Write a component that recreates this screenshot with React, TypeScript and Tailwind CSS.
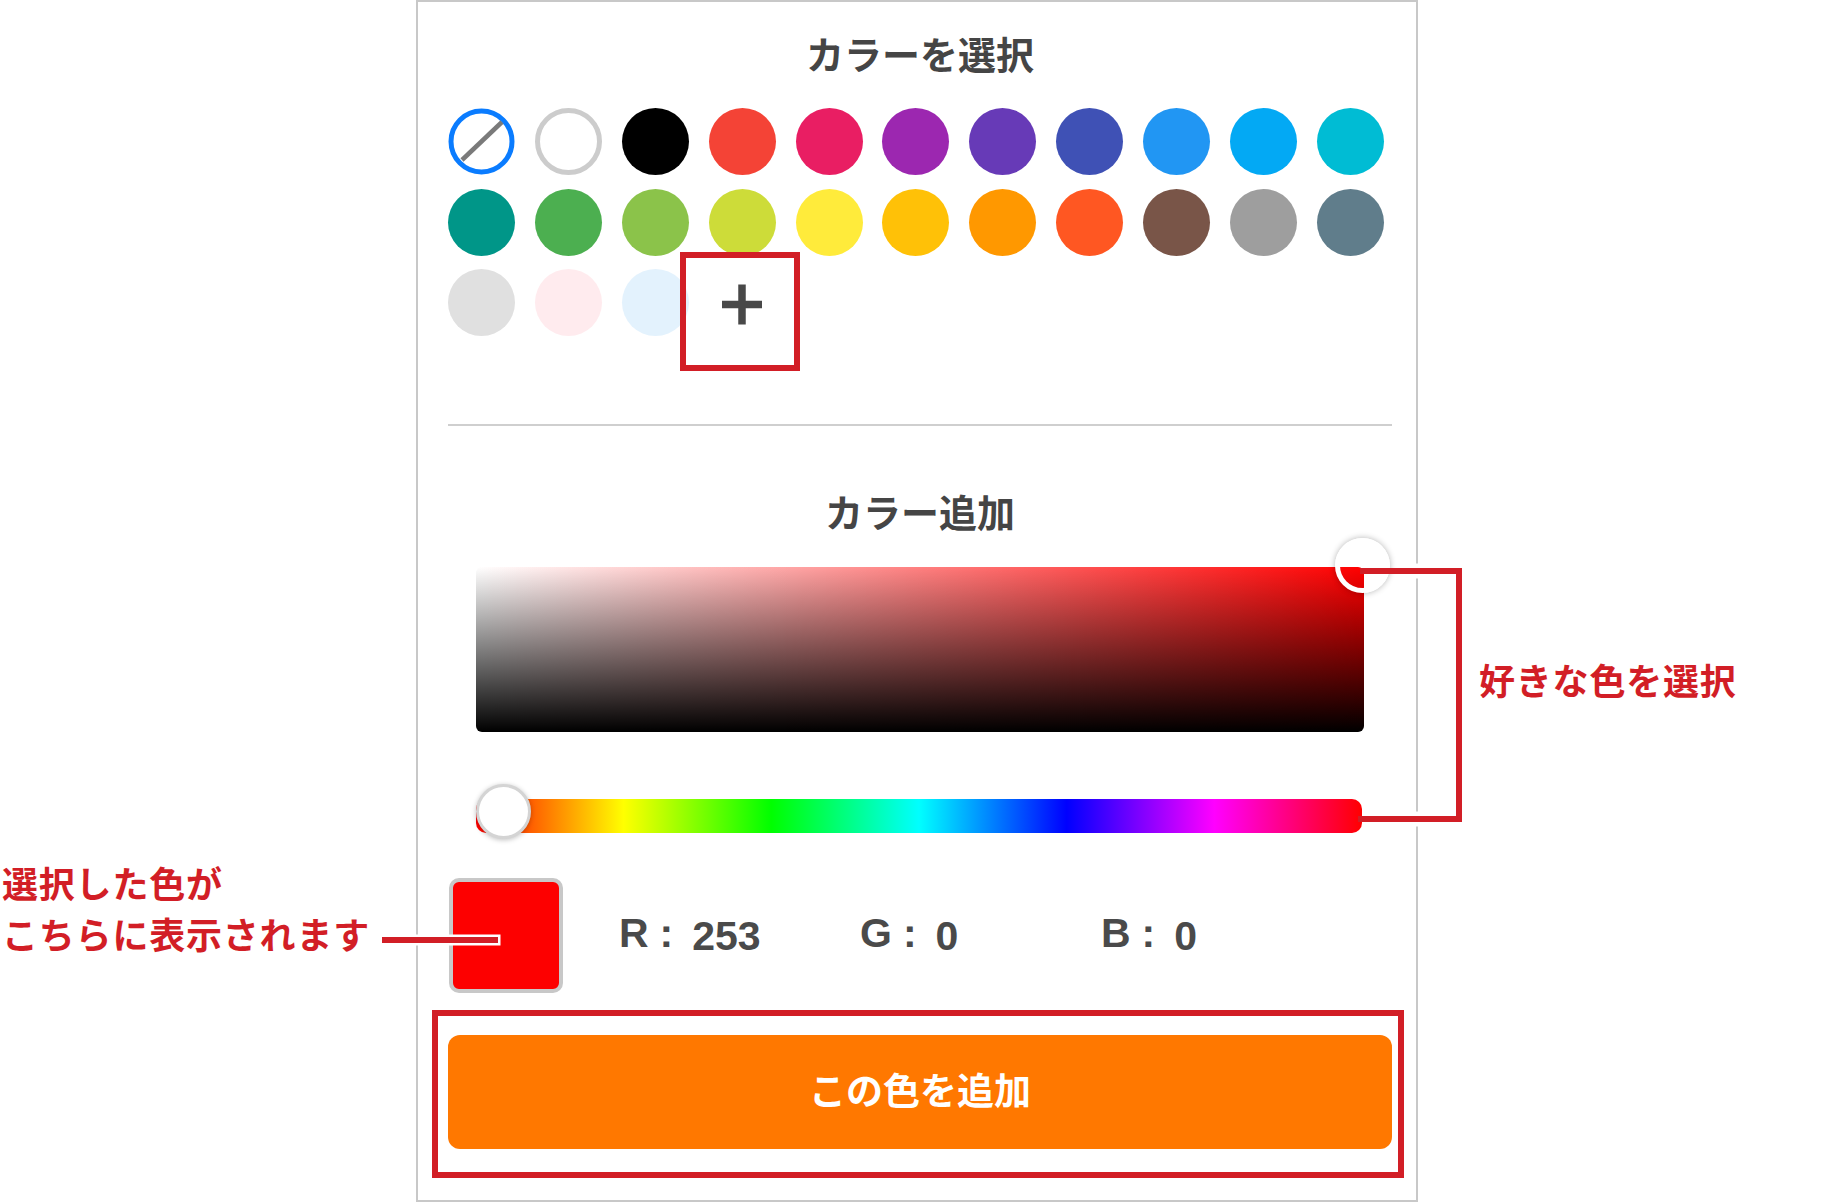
import React from "react";

const RED = "#d21e26";

const row1 = [
  "none",
  "white",
  "bg-[#000000]",
  "bg-[#f44336]",
  "bg-[#e91e63]",
  "bg-[#9c27b0]",
  "bg-[#673ab7]",
  "bg-[#3f51b5]",
  "bg-[#2196f3]",
  "bg-[#03a9f4]",
  "bg-[#00bcd4]",
];
const row2 = [
  "bg-[#009688]",
  "bg-[#4caf50]",
  "bg-[#8bc34a]",
  "bg-[#cddc39]",
  "bg-[#ffeb3b]",
  "bg-[#ffc107]",
  "bg-[#ff9800]",
  "bg-[#ff5722]",
  "bg-[#795548]",
  "bg-[#9e9e9e]",
  "bg-[#607d8b]",
];
const row3 = ["bg-[#e0e0e0]", "bg-[#ffebee]", "bg-[#e3f2fd]"];

function Swatch({ c }: { c: string }) {
  if (c === "none") {
    return (
      <svg width="67" height="67" viewBox="0 0 67 67">
        <circle cx="33.5" cy="33.5" r="30.5" fill="white" stroke="#0a7cff" strokeWidth="5" />
        <line x1="14" y1="52" x2="54" y2="14" stroke="#7a7a7a" strokeWidth="4.5" />
      </svg>
    );
  }
  if (c === "white") {
    return <div className="w-[67px] h-[67px] rounded-full bg-white border-[5px] border-[#cccccc]" />;
  }
  return <div className={`w-[67px] h-[67px] rounded-full ${c}`} />;
}

function Channel({ label, value }: { label: string; value: string }) {
  return (
    <div className="flex items-baseline w-[241px]">
      <span>{label}</span>
      <span className="ml-[11px]">:</span>
      <span className="ml-[19px] translate-y-[3px]">{value}</span>
    </div>
  );
}

export default function App() {
  return (
    <div className="relative flex w-[1844px] h-[1202px] bg-white overflow-hidden font-['Noto_Sans_CJK_JP',sans-serif]">
      {/* left annotation */}
      <div className="w-[416px] shrink-0 pt-[857px] pl-[2px]">
        <p className="text-[36px] leading-[51px] tracking-[0.8px] font-bold text-[#d21e26] whitespace-nowrap">
          選択した色が
          <br />
          こちらに表示されます
        </p>
      </div>

      {/* panel */}
      <div className="w-[1002px] h-[1202px] shrink-0 border-2 border-[#c8c8c8] pl-[30px] pr-[24px] flex flex-col">
        <h2 className="mt-[32px] text-center text-[38px] leading-[38px] font-bold text-[#454545]">
          カラーを選択
        </h2>

        <div className="mt-[36px] grid grid-cols-[repeat(11,67px)] gap-x-[19.9px] gap-y-[13.5px]">
          {row1.map((c, i) => (
            <Swatch key={"a" + i} c={c} />
          ))}
          {row2.map((c, i) => (
            <Swatch key={"b" + i} c={c} />
          ))}
          {row3.map((c, i) => (
            <Swatch key={"c" + i} c={c} />
          ))}
          <div className="relative w-[67px] h-[67px] flex items-center justify-center">
            <svg width="42" height="42" viewBox="0 0 42 42" className="translate-y-[1.5px]">
              <line x1="21" y1="1" x2="21" y2="41" stroke="#484848" strokeWidth="7.5" />
              <line x1="1" y1="21" x2="41" y2="21" stroke="#484848" strokeWidth="7.5" />
            </svg>
            <div className="absolute left-[-28.7px] top-[-17px] w-[120px] h-[119px] border-[6px] border-[#d21e26]" />
          </div>
        </div>

        <div className="mt-[88px] h-[2px] bg-[#cfcfcf]" />

        <h2 className="mt-[66px] text-center text-[38px] leading-[38px] font-bold text-[#454545]">
          カラー追加
        </h2>

        <div className="relative mt-[37px] mx-[28px] h-[165px] rounded-[6px] bg-[image:linear-gradient(to_top,#000000,rgba(0,0,0,0)),linear-gradient(to_right,#ffffff,#ff0000)]">
          <div className="absolute -right-[26px] -top-[29.5px] w-[55px] h-[55px] rounded-full border-[5px] border-white shadow-[0_0_6px_rgba(0,0,0,0.3)]" />
        </div>

        <div className="relative mt-[67px] ml-[28px] mr-[30px] h-[34px] rounded-[10px] bg-[image:linear-gradient(to_right,#ff0000,#ffff00,#00ff00,#00ffff,#0000ff,#ff00ff,#ff0000)]">
          <div className="absolute left-0 -top-[15.5px] w-[55px] h-[55px] rounded-full bg-white border-[3px] border-[#d4d4d4] shadow-[0_1px_5px_rgba(0,0,0,0.25)]" />
        </div>

        <div className="mt-[45px] flex items-start">
          <div className="ml-[1px] w-[114px] h-[115px] rounded-[10px] border-4 border-[#c8c8c8] bg-[#fd0000]" />
          <div className="ml-[56px] mt-[33.5px] flex font-['Liberation_Sans',Arial,sans-serif] font-bold text-[41px] leading-[42px] text-[#4a4a4a]">
            <Channel label="R" value="253" />
            <Channel label="G" value="0" />
            <Channel label="B" value="0" />
          </div>
        </div>

        <div className="relative mt-[42px] h-[114px] pb-[6px] rounded-[12px] bg-[#ff7800] flex items-center justify-center text-white text-[37px] leading-[37px] font-bold">
          この色を追加
          <div className="absolute -left-[16px] -top-[25px] w-[972px] h-[168px] border-[6px] border-[#d21e26]" />
        </div>
      </div>

      {/* right annotation */}
      <div className="flex-1 pt-[661px] pl-[61px]">
        <p className="text-[36px] leading-[36px] tracking-[0.8px] font-bold text-[#d21e26] whitespace-nowrap">
          好きな色を選択
        </p>
      </div>

      {/* connector to selected colour swatch */}
      <div className="absolute left-[382px] top-[937px] w-[116px] h-[6px] bg-[#d21e26] shadow-[0_0_0_2.5px_white]" />

      {/* bracket to picker */}
      <svg
        className="absolute left-[1350px] top-[560px]"
        width="120"
        height="270"
        viewBox="0 0 120 270"
      >
        <line x1="52" y1="11" x2="84" y2="11" stroke="white" strokeWidth="15" />
        <line x1="52" y1="259" x2="84" y2="259" stroke="white" strokeWidth="15" />
        <polyline
          points="10,11 109,11 109,259 8,259"
          fill="none"
          stroke={RED}
          strokeWidth="6"
          strokeLinejoin="miter"
        />
      </svg>
    </div>
  );
}
